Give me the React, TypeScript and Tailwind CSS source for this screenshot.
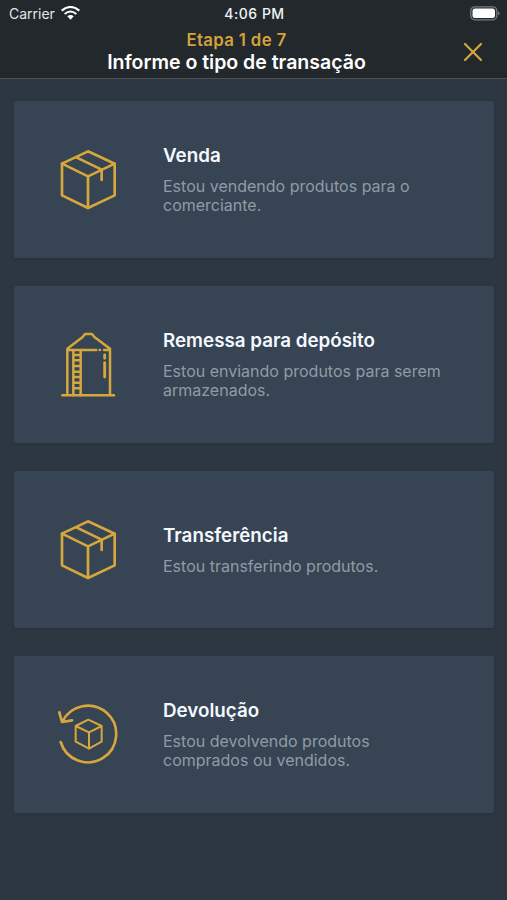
import type { ReactNode } from "react";

const stroke = {
  fill: "none",
  stroke: "#d6a73c",
  strokeLinecap: "round" as const,
  strokeLinejoin: "round" as const,
};

function BoxIcon() {
  return (
    <svg className="size-[90px]" viewBox="0 0 270 270" strokeWidth="8" {...stroke}>
      <path d="M129 49 209 86V181L129 219 51 181V86Z" />
      <path d="M51 86 129 124 209 86M129 124V219M94 67 170 104V135" />
    </svg>
  );
}

function SiloIcon() {
  return (
    <svg className="size-[90px]" viewBox="0 0 270 270" strokeWidth="7.5" {...stroke}>
      <path d="M52 226H207M67 226V86L113 51 120 42H141L148 51 195 86V226M67 90H154M177 90H195" />
      <path d="M85 91V226M107 91V226M85 105H107M85 121H107M85 138H107M85 155H107M85 171H107M85 188H107M85 205H107" />
      <path d="M179 105V115M179 128V171" strokeWidth="8.5" />
      <path d="M164 90H165" />
    </svg>
  );
}

function ReturnIcon() {
  return (
    <svg className="size-[90px]" viewBox="0 0 270 270" strokeWidth="8" {...stroke}>
      <path d="M47 156A85 85 0 1 0 52 95M43 67 51 96 81 91" />
      <path strokeWidth="6" d="M130 89 170 108V155L132 176 92 155V108ZM92 108 132 127 170 108M132 127V176" />
    </svg>
  );
}

function Card({ icon, title, children }: { icon: ReactNode; title: string; children: ReactNode }) {
  return (
    <section className="flex h-[157px] items-center rounded-[2px] bg-[#374453] pl-[31px] shadow-[0_1px_3px_rgba(20,30,38,0.25)]">
      {icon}
      <div className="ml-[28px] flex flex-col gap-[8px] pb-[2px] whitespace-nowrap">
        <h2 className="text-[18.8px] leading-[27px] font-semibold text-[#f4f9ff]">{title}</h2>
        <p className="text-[16px] leading-[19px] text-[#919ba6]">{children}</p>
      </div>
    </section>
  );
}

export default function App() {
  return (
    <main className="flex h-[900px] w-[507px] flex-col overflow-hidden bg-[#2c3742] font-['Inter','Liberation_Sans',sans-serif]">
      <header className="h-[79px] border-b border-[#4a5256] bg-[#23282c]">
        <div className="grid h-[28px] grid-cols-[1fr_auto_1fr] items-center pr-[7px] pl-[9px] text-[14px] text-[#e4e6e7]">
          <div className="-mt-[2px] flex items-center gap-[6px]">
            <span>Carrier</span>
            <svg className="h-[14px] w-[19px]" viewBox="0 0 57 42" fill="none" stroke="white" strokeWidth="6.5">
              <path d="M2 14Q28.500-8 55 14M11 24Q28.500 9 46 24" />
              <path d="M19 31Q28.500 23 38 31L28.500 41Z" fill="white" stroke="none" />
            </svg>
          </div>
          <span className="-mt-[2px] text-center font-medium tracking-[0.5px] text-[#f1f3f4]">4:06 PM</span>
          <svg className="-mt-[1px] h-[15px] w-[30px] justify-self-end" viewBox="0 0 30 15">
            <rect x="0.800" y="0.800" width="26" height="13" rx="4" fill="#23282c" stroke="#777b7e" strokeWidth="1.300" />
            <rect x="2.500" y="2.500" width="22.500" height="9.600" rx="2.500" fill="white" />
            <path d="M28 5Q31 7.300 28 9.600Z" fill="#777b7e" />
          </svg>
        </div>
        <div className="grid grid-cols-[68px_337px_34px_68px] items-center">
          <span />
          <div className="flex flex-col items-center whitespace-nowrap">
            <p className="text-[16.8px] leading-[24px] font-semibold tracking-[0.35px] text-[#d3a33b]">Etapa 1 de 7</p>
            <h1 className="-mt-[1px] mb-[1px] text-[19.5px] leading-[22px] font-semibold text-white">Informe o tipo de transação</h1>
          </div>
          <span />
          <button aria-label="Fechar" className="flex justify-center pt-[2px]">
            <svg className="size-[20px]" viewBox="0 0 20 20" strokeWidth="2.2" {...stroke}>
              <path d="M2 2 18 18M18 2 2 18" />
            </svg>
          </button>
        </div>
      </header>
      <div className="flex flex-col gap-[28px] pt-[22px] pr-[13px] pl-[14px]">
        <Card icon={<BoxIcon />} title="Venda">
          Estou vendendo produtos para o<br />comerciante.
        </Card>
        <Card icon={<SiloIcon />} title="Remessa para depósito">
          Estou enviando produtos para serem<br />armazenados.
        </Card>
        <Card icon={<BoxIcon />} title="Transferência">
          Estou transferindo produtos.
        </Card>
        <Card icon={<ReturnIcon />} title="Devolução">
          Estou devolvendo produtos<br />comprados ou vendidos.
        </Card>
      </div>
    </main>
  );
}
